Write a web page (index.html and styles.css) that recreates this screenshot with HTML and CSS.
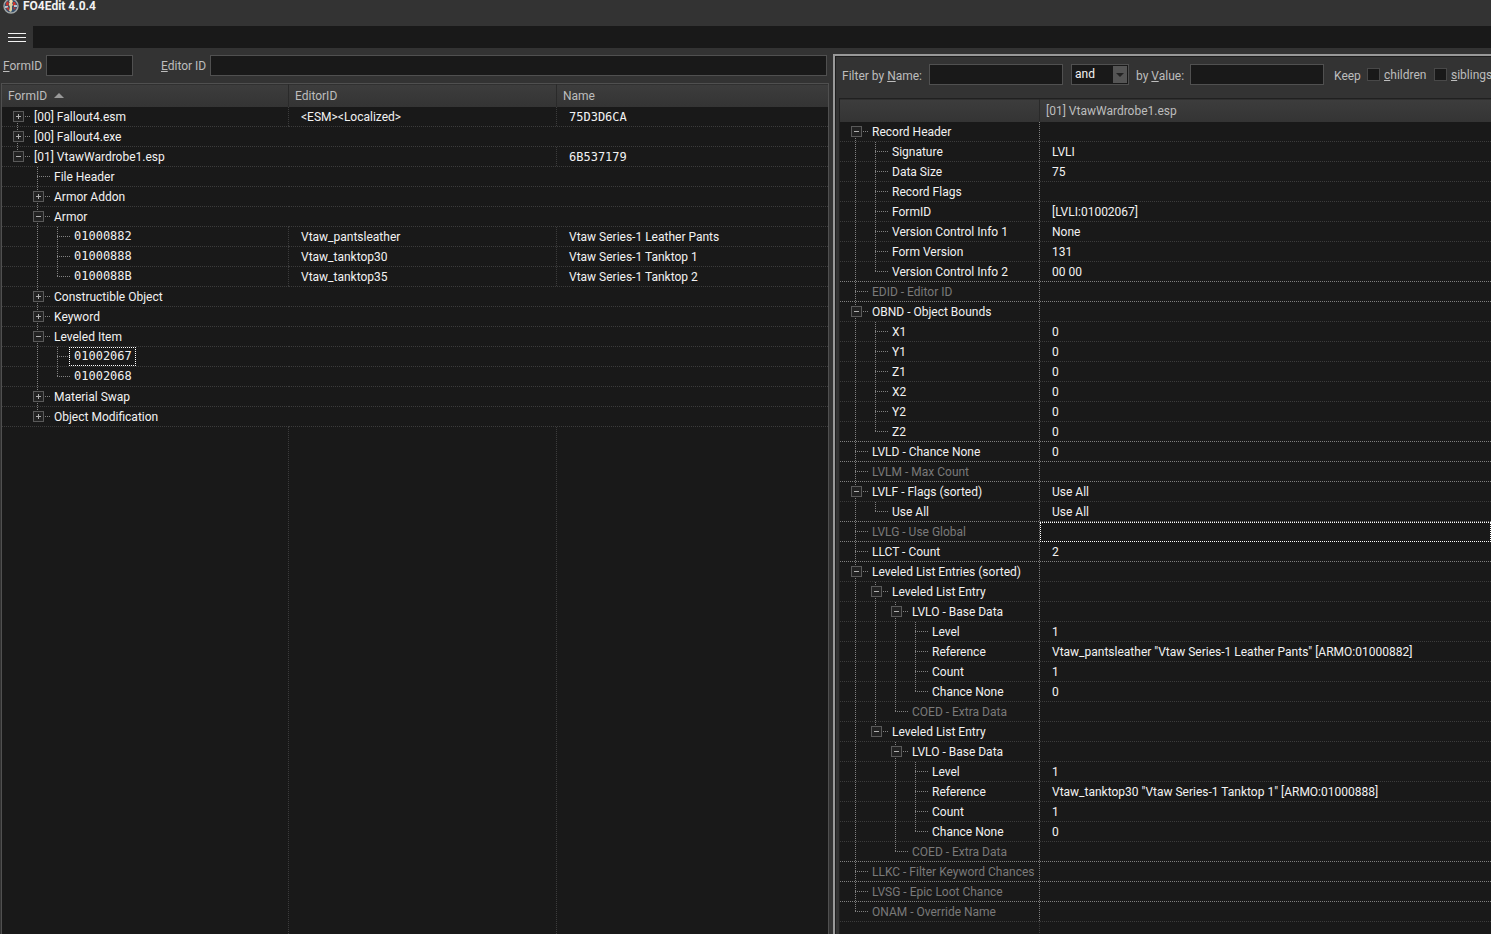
FILE: index.html
```html
<!DOCTYPE html>
<html lang="en">
<head>
  <meta charset="UTF-8" />
  <meta name="viewport" content="width=device-width, initial-scale=1" />
  <title>FO4Edit 4.0.4</title>
  <link rel="stylesheet" href="styles.css">
</head>
<body>

  <!-- Title bar -->
  <header class="title-bar">
    <svg class="logo" viewBox="0 0 16 16" aria-hidden="true">
      <circle cx="8" cy="8" r="7" fill="#34506f" stroke="#a3a8a8" stroke-width="1.4"/>
      <path d="M3 5l2-2 1 3-1 2-2-1zM10 4l2 0 1 3-3 1z" fill="#c8352e"/>
      <path d="M2 8h3v2H2zM11 7h3v2h-3z" fill="#b9c3cc"/>
      <path d="M3 10l3-1v4zM10 9l3 1-2 2z" fill="#b9342f"/>
      <path d="M6 5h3l1 2-1 1v4l-1 2-2-1 1-4-1-2z" fill="#d9cfa0"/>
      <circle cx="8" cy="3.6" r="1.8" fill="#f0dcae"/>
    </svg>
    <h1>FO4Edit 4.0.4</h1>
  </header>

  <!-- Menu + path -->
  <div class="menu-bar">
    <button class="hamburger" aria-label="Menu"><span></span><span></span><span></span></button>
    <input type="text" class="path" aria-label="Path" readonly>
  </div>

  <main class="container">
    <!-- Navigation tree -->
    <section class="nav-pane">
      <form class="search-bar">
        <label for="form-id" class="form-id-label"><u>F</u>ormID</label>
        <input type="text" id="form-id" class="form-id">
        <label for="editor-id" class="editor-id-label"><u>E</u>ditor ID</label>
        <input type="text" id="editor-id" class="editor-id">
      </form>
      <div class="grid-box nav-box">
        <table class="tree">
          <colgroup><col class="col-form"><col class="col-editor"><col></colgroup>
          <thead>
            <tr><th>FormID <span class="sort-arrow"></span></th><th>EditorID</th><th>Name</th></tr>
          </thead>
          <tbody id="nav-rows"></tbody>
        </table>
        <div class="filler"><span class="col-form"></span><span class="col-editor"></span></div>
      </div>
    </section>

    <!-- Record view -->
    <section class="view-pane">
      <form class="filter-bar">
        <label for="filter-name" class="name-label">Filter by <u>N</u>ame:</label>
        <input type="text" id="filter-name" class="filter">
        <div class="operator">
          <select aria-label="Operator"><option>and</option><option>or</option></select>
          <svg viewBox="0 0 14 17" aria-hidden="true"><path d="M3 7h8l-4 4z" fill="#222222"/></svg>
        </div>
        <label for="filter-value" class="value-label">by <u>V</u>alue:</label>
        <input type="text" id="filter-value" class="filter">
        <span class="keep">Keep</span>
        <label class="check children"><input type="checkbox"><span><u>c</u>hildren</span></label>
        <label class="check"><input type="checkbox"><span><u>s</u>iblings</span></label>
      </form>
      <div class="grid-box view-box">
        <table class="tree">
          <colgroup><col class="col-element"><col></colgroup>
          <thead>
            <tr><th></th><th>[01] VtawWardrobe1.esp</th></tr>
          </thead>
          <tbody id="view-rows"></tbody>
        </table>
        <div class="filler"><span class="col-element"></span></div>
      </div>
    </section>
  </main>

  <script src="script.js"></script>
</body>
</html>
```
FILE: styles.css
```css
* { box-sizing: border-box; margin: 0; padding: 0; }
:root {
  --bg: #333333;
  --dark: #191919;
  --edge: #505050;
  --line: #3c3c3c;
  --bright: #808080;
  --label: #bdbdbd;
}
body {
  height: 100vh;
  display: flex;
  flex-direction: column;
  overflow: hidden;
  background: var(--bg);
  color: #f2f2f2;
  font-family: Roboto, "Open Sans", sans-serif;
  font-size: 12px;
  line-height: 16px;
}
input, select, button { font: inherit; color: inherit; outline: none; }
input[type="text"] { height: 21px; padding: 0 4px; background: var(--dark); border: 1px solid var(--edge); }
label, .keep { color: var(--label); white-space: nowrap; }

/* ===== Title bar ===== */
.title-bar { display: flex; gap: 4px; height: 26px; padding-left: 3px; flex-shrink: 0; }
.title-bar h1 { font-size: 12px; line-height: 13px; font-weight: 700; }
.logo { width: 16px; height: 16px; margin-top: -2px; }

/* ===== Menu bar ===== */
.menu-bar { display: flex; height: 22px; flex-shrink: 0; }
.hamburger {
  width: 33px;
  padding: 0 7px 0 8px;
  display: flex;
  flex-direction: column;
  justify-content: center;
  gap: 3px;
  background: none;
  border: none;
}
.hamburger span { height: 1px; background: #f2f2f2; }
.menu-bar input.path { flex: 1; height: 22px; border: none; }

/* ===== Panes ===== */
.container { flex: 1; display: grid; grid-template-columns: 833fr 658fr; min-height: 0; }
.nav-pane { display: flex; flex-direction: column; min-width: 0; padding: 7px 4px 0 1px; }
.search-bar { display: flex; align-items: center; height: 21px; margin-bottom: 7px; padding: 0 2px; }
.form-id-label { width: 43px; }
.form-id { width: 87px; }
.editor-id-label { width: 49px; margin-left: 28px; }
.editor-id { flex: 1; min-width: 0; }
.view-pane {
  display: flex;
  flex-direction: column;
  min-width: 0;
  margin-top: 6px;
  padding: 8px 0 0 4px;
  border: solid #999999;
  border-width: 2px 0 0 2px;
  box-shadow: inset 1px 1px #1e1e1e;
  overflow: hidden;
}
.filter-bar { display: flex; align-items: center; height: 21px; margin-bottom: 13px; padding-left: 3px; }
.filter-bar > * { flex-shrink: 0; }
.name-label { width: 87px; }
.filter { width: 134px; }
.operator { position: relative; width: 58px; height: 21px; margin: 0 7px 0 8px; }
.operator select { display: block; width: 100%; height: 100%; padding: 0 0 2px 3px; appearance: none; border: 1px solid var(--edge); border-radius: 0; background: var(--dark); }
.operator svg { position: absolute; right: 2px; top: 2px; width: 14px; height: 17px; background: #555555; pointer-events: none; }
.value-label { width: 54px; }
.keep { width: 33px; margin-left: 10px; }
.name-label, .value-label, .keep { padding-top: 2px; }
.check { display: flex; align-items: center; gap: 4px; }
.check.children { width: 67px; }
.check input { appearance: none; width: 13px; height: 13px; border: 1px solid #484848; background: var(--dark); }

/* ===== Grids ===== */
.grid-box { flex: 1; display: flex; flex-direction: column; min-height: 0; overflow: hidden; background: var(--dark); border: solid var(--edge); border-width: 1px 1px 0; }
.view-box { border-color: #202020; border-right: none; }
.tree { width: 100%; table-layout: fixed; border-collapse: collapse; }
.col-form { width: 287px; }
.col-editor { width: 268px; }
.col-element { width: 200px; }
.tree th {
  height: 23px;
  padding: 1px 0 0 6px;
  text-align: left;
  font-weight: 400;
  color: var(--label);
  background: linear-gradient(#3d3d3d, #343434);
  box-shadow: inset -1px 0 #2a2a2a, inset 0 1px #303030;
}
.tree th:last-child { box-shadow: inset 0 1px #303030; }
.sort-arrow { display: inline-block; margin: 0 0 2px 4px; border: solid transparent; border-width: 0 5px 5px; border-bottom-color: #999999; }
.tree td {
  height: 20px;
  padding: 0 0 1px 12px;
  white-space: nowrap;
  overflow: hidden;
  background: repeating-linear-gradient(90deg, var(--row-line, var(--line)) 0 1px, transparent 1px 2px) bottom left / 100% 1px no-repeat;
}
.tree tr.major td { --row-line: var(--bright); }
.tree td.edge {
  background:
    repeating-linear-gradient(90deg, var(--row-line, var(--line)) 0 1px, transparent 1px 2px) bottom left / 100% 1px no-repeat,
    repeating-linear-gradient(var(--edge-line, var(--line)) 0 1px, transparent 1px 2px) top right / 1px 100% no-repeat;
}
.view-box td.edge { --edge-line: var(--bright); }
.tree td:first-child { padding: 0 0 0 11px; }
.node { display: flex; height: 20px; }
.node .text { padding-left: 1px; line-height: 20px; }
.node .text.mono { line-height: 19px; }
.mono { font-family: "DejaVu Sans Mono", monospace; }
.disabled { color: #7a7a7a; }
.node .text.focused { margin: 0 0 1px -4px; padding: 0 3px 0 4px; border: 1px dotted #ffffff; line-height: 17px; }
.tree td.focused { outline: 1px dotted #ffffff; outline-offset: -1px; }

/* tree lines: one 20px slot per level */
.slot { width: 20px; height: 20px; position: relative; flex-shrink: 0; }
.slot::before {
  content: "";
  position: absolute;
  left: 4px;
  top: 0;
  width: 1px;
  height: 20px;
}
.slot.pass::before, .slot.tee::before, .slot.end::before { background: repeating-linear-gradient(var(--bright) 0 1px, transparent 1px 2px); }
.slot.end::before { height: 10px; }
.slot.root::before { top: 10px; height: 10px; }
.slot.tee::after, .slot.end::after {
  content: "";
  position: absolute;
  left: 4px;
  top: 9px;
  width: 13px;
  height: 1px;
  background: repeating-linear-gradient(90deg, var(--bright) 0 1px, transparent 1px 2px);
}
.toggle {
  position: absolute;
  z-index: 1;
  left: 0;
  top: 4px;
  width: 11px;
  height: 11px;
  border: 1px solid #5a5a5a;
  background: linear-gradient(#b0b0b0, #b0b0b0) center / 5px 1px no-repeat, #222222;
}
.toggle.plus { background: linear-gradient(#b0b0b0, #b0b0b0) center / 5px 1px no-repeat, linear-gradient(#b0b0b0, #b0b0b0) center / 1px 5px no-repeat, #222222; }

/* empty space under the rows */
.filler { flex: 1; display: flex; }
.filler span { background: repeating-linear-gradient(var(--line) 0 1px, transparent 1px 2px) top right / 1px 100% no-repeat; }
```
FILE: script.js
```js
// depth, label, toggle ('+', '-' or ''), then the other columns
const navData = [
  [0, '[00] Fallout4.esm', '+', '<ESM><Localized>', '75D3D6CA'],
  [0, '[00] Fallout4.exe', '+'],
  [0, '[01] VtawWardrobe1.esp', '-', '', '6B537179'],
  [1, 'File Header', ''],
  [1, 'Armor Addon', '+'],
  [1, 'Armor', '-'],
  [2, '01000882', '', 'Vtaw_pantsleather', 'Vtaw Series-1 Leather Pants'],
  [2, '01000888', '', 'Vtaw_tanktop30', 'Vtaw Series-1 Tanktop 1'],
  [2, '0100088B', '', 'Vtaw_tanktop35', 'Vtaw Series-1 Tanktop 2'],
  [1, 'Constructible Object', '+'],
  [1, 'Keyword', '+'],
  [1, 'Leveled Item', '-'],
  [2, '01002067', ''],
  [2, '01002068', ''],
  [1, 'Material Swap', '+'],
  [1, 'Object Modification', '+'],
];

const viewData = [
  [0, 'Record Header', '-', ''],
  [1, 'Signature', '', 'LVLI'],
  [1, 'Data Size', '', '75'],
  [1, 'Record Flags', '', ''],
  [1, 'FormID', '', '[LVLI:01002067]'],
  [1, 'Version Control Info 1', '', 'None'],
  [1, 'Form Version', '', '131'],
  [1, 'Version Control Info 2', '', '00 00'],
  [0, 'EDID - Editor ID', '', ''],
  [0, 'OBND - Object Bounds', '-', ''],
  [1, 'X1', '', '0'],
  [1, 'Y1', '', '0'],
  [1, 'Z1', '', '0'],
  [1, 'X2', '', '0'],
  [1, 'Y2', '', '0'],
  [1, 'Z2', '', '0'],
  [0, 'LVLD - Chance None', '', '0'],
  [0, 'LVLM - Max Count', '', ''],
  [0, 'LVLF - Flags (sorted)', '-', 'Use All'],
  [1, 'Use All', '', 'Use All'],
  [0, 'LVLG - Use Global', '', ''],
  [0, 'LLCT - Count', '', '2'],
  [0, 'Leveled List Entries (sorted)', '-', ''],
  [1, 'Leveled List Entry', '-', ''],
  [2, 'LVLO - Base Data', '-', ''],
  [3, 'Level', '', '1'],
  [3, 'Reference', '', 'Vtaw_pantsleather "Vtaw Series-1 Leather Pants" [ARMO:01000882]'],
  [3, 'Count', '', '1'],
  [3, 'Chance None', '', '0'],
  [2, 'COED - Extra Data', '', ''],
  [1, 'Leveled List Entry', '-', ''],
  [2, 'LVLO - Base Data', '-', ''],
  [3, 'Level', '', '1'],
  [3, 'Reference', '', 'Vtaw_tanktop30 "Vtaw Series-1 Tanktop 1" [ARMO:01000888]'],
  [3, 'Count', '', '1'],
  [3, 'Chance None', '', '0'],
  [2, 'COED - Extra Data', '', ''],
  [0, 'LLKC - Filter Keyword Chances', '', ''],
  [0, 'LVSG - Epic Loot Chance', '', ''],
  [0, 'ONAM - Override Name', '', ''],
];

const isHex = text => /^[0-9A-F]{8}$/.test(text);

// is there a later row at this level under the same parent?
function hasNext(rows, index, level) {
  for (let i = index + 1; i < rows.length; i++) {
    if (rows[i][0] < level) return false;
    if (rows[i][0] === level) return true;
  }
  return false;
}

function makeNode(rows, index) {
  const [depth, label, toggle] = rows[index];
  const node = document.createElement('div');
  node.className = 'node';
  for (let level = 0; level <= depth; level++) {
    const slot = document.createElement('span');
    const next = hasNext(rows, index, level);
    slot.className = 'slot';
    if (level < depth) {
      if (next) slot.classList.add('pass');
    } else {
      slot.classList.add(next ? 'tee' : 'end');
      if (index === 0) slot.classList.add('root');
      if (toggle) {
        const button = document.createElement('button');
        button.className = toggle === '+' ? 'toggle plus' : 'toggle';
        button.setAttribute('aria-label', (toggle === '+' ? 'Expand ' : 'Collapse ') + label);
        slot.appendChild(button);
      }
    }
    node.appendChild(slot);
  }
  const text = document.createElement('span');
  text.className = 'text';
  if (isHex(label)) text.classList.add('mono');
  if (label === '01002067') text.classList.add('focused');
  text.textContent = label;
  node.appendChild(text);
  return node;
}

function renderNav() {
  const body = document.getElementById('nav-rows');
  navData.forEach((row, index) => {
    const tr = body.insertRow();
    let previous = tr.insertCell();
    previous.appendChild(makeNode(navData, index));
    [row[3], row[4]].forEach(value => {
      const td = tr.insertCell();
      if (value) {
        td.textContent = value;
        previous.classList.add('edge');
        if (isHex(value)) td.classList.add('mono');
      }
      previous = td;
    });
  });
}

function renderView() {
  const body = document.getElementById('view-rows');
  const missing = /^(EDID|LVLM|LVLG|COED|LLKC|LVSG|ONAM)/;
  viewData.forEach((row, index) => {
    const tr = body.insertRow();
    const next = viewData[index + 1];
    if (next && next[0] === 0) tr.classList.add('major');
    const first = tr.insertCell();
    first.className = 'edge';
    first.appendChild(makeNode(viewData, index));
    if (missing.test(row[1])) first.classList.add('disabled');
    const td = tr.insertCell();
    td.textContent = row[3];
    if (row[1].startsWith('LVLG')) td.classList.add('focused');
  });
}

renderNav();
renderView();
```
